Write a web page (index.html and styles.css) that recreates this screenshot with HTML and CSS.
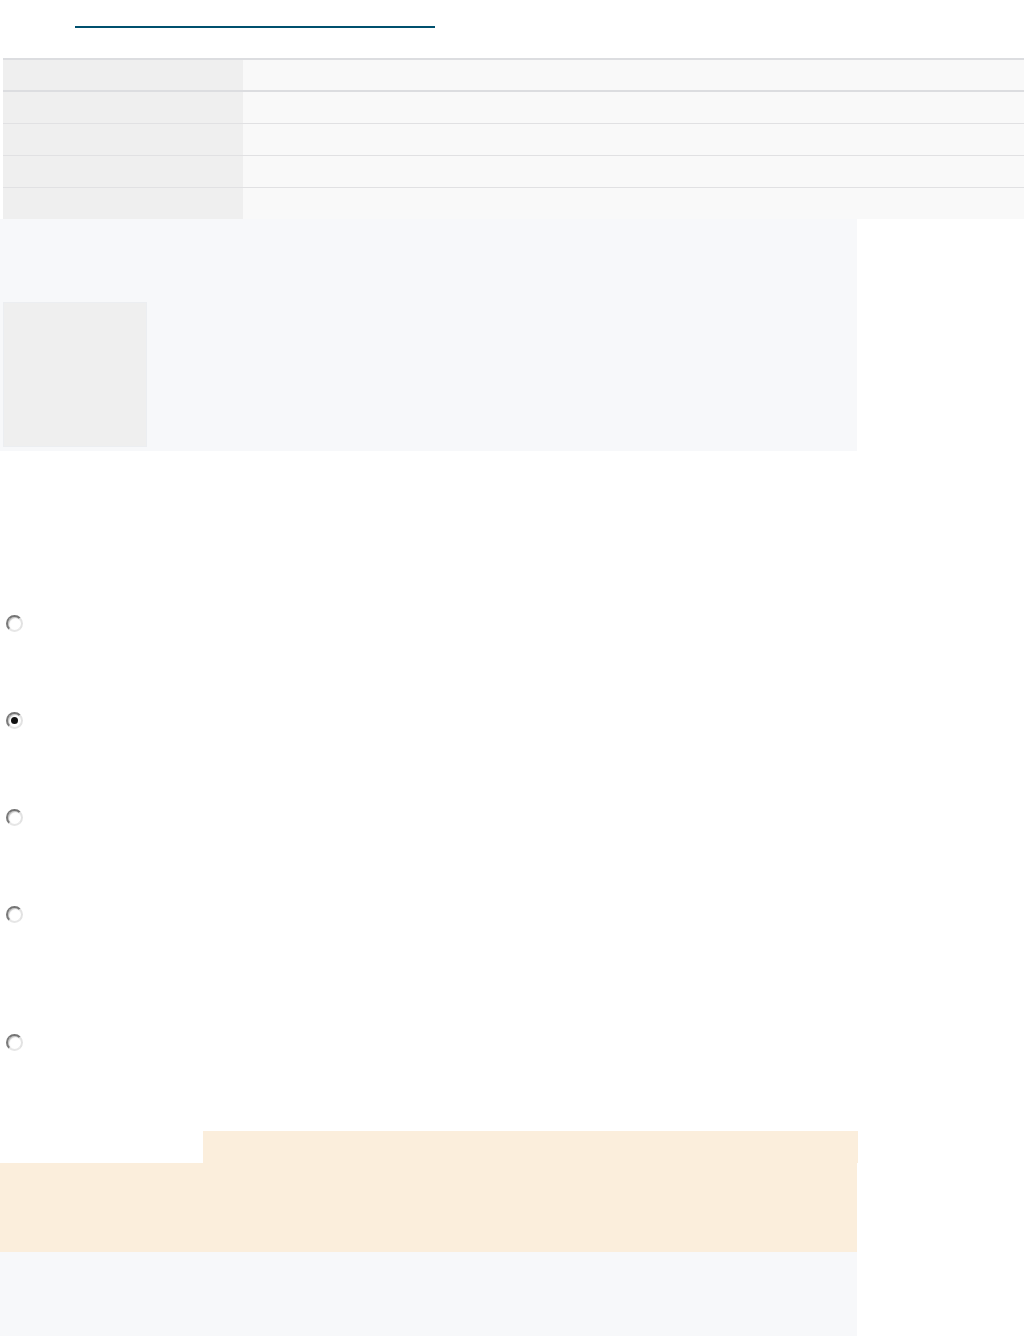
FILE: index.html
```html
<!DOCTYPE html>
<html lang="en">
<head>
    <meta charset="UTF-8">
    <meta name="viewport" content="width=device-width, initial-scale=1.0">
    <title>Form</title>
    <link rel="stylesheet" href="styles.css">
</head>
<body>
    <div class="top">
        <a class="top-link" href="#"></a>
    </div>

    <div class="info">
        <div class="info-row first"><div class="info-key"></div><div class="info-val"></div></div>
        <div class="info-row second"><div class="info-key"></div><div class="info-val"></div></div>
        <div class="info-row"><div class="info-key"></div><div class="info-val"></div></div>
        <div class="info-row"><div class="info-key"></div><div class="info-val"></div></div>
        <div class="info-row last"><div class="info-key"></div><div class="info-val"></div></div>
    </div>

    <div class="panel">
        <div class="thumb"></div>
    </div>

    <div class="options">
        <div class="opt"><span class="radio"></span></div>
        <div class="opt"><span class="radio checked"></span></div>
        <div class="opt"><span class="radio"></span></div>
        <div class="opt tall"><span class="radio"></span></div>
        <div class="opt"><span class="radio"></span></div>
    </div>

    <div class="note">
        <div class="note-tab"></div>
        <div class="note-body"></div>
    </div>

    <div class="foot"></div>
</body>
</html>
```

FILE: styles.css
```css
body {
    margin: 0;
    font-family: "Liberation Sans", Arial, sans-serif;
    background-color: #ffffff;
    overflow: hidden;
}
.top {
    height: 58px;
    padding-left: 75px;
}
.top-link {
    display: block;
    width: 360px;
    height: 26px;
    border-bottom: 2px solid #00506e;
}
.info {
    margin-left: 3px;
    width: 1021px;
    border-top: 2px solid #dcdde0;
}
.info-row {
    display: flex;
    height: 31px;
    border-bottom: 1px solid #e1e1e3;
}
.info-row.first {
    height: 30px;
    border-bottom: 2px solid #dcdde0;
}
.info-row.last {
    border-bottom: none;
}
.info-key {
    width: 240px;
    background-color: #efefef;
}
.info-val {
    flex: 1;
    background-color: #f9f9f9;
}
.panel {
    width: 857px;
    box-sizing: border-box;
    padding: 83px 0 4px 3px;
    background-color: #f7f8fa;
}
.thumb {
    width: 142px;
    height: 143px;
    background-color: #efefef;
    border: 1px solid #eceef1;
}
.options {
    padding-top: 164px;
}
.opt {
    height: 97px;
    padding-left: 6px;
}
.opt.tall {
    height: 128px;
}
.radio {
    display: block;
    width: 13px;
    height: 13px;
    border-radius: 50%;
    border: 2px solid;
    border-color: #747474 #e2e2e2 #e6e6e6 #7a7a7a;
    background: #ffffff;
    box-shadow: inset 1px 1px 1px #c4c4c4;
    position: relative;
}
.radio.checked::after {
    content: "";
    position: absolute;
    left: 3px;
    top: 3px;
    width: 7px;
    height: 7px;
    border-radius: 50%;
    background: #111111;
}
.note {
    width: 858px;
}
.note-tab {
    margin-left: 203px;
    height: 32px;
    background-color: #fbeedc;
}
.note-body {
    width: 857px;
    height: 89px;
    background-color: #fbeedc;
}
.foot {
    width: 857px;
    height: 120px;
    background-color: #f7f8fa;
}
```
